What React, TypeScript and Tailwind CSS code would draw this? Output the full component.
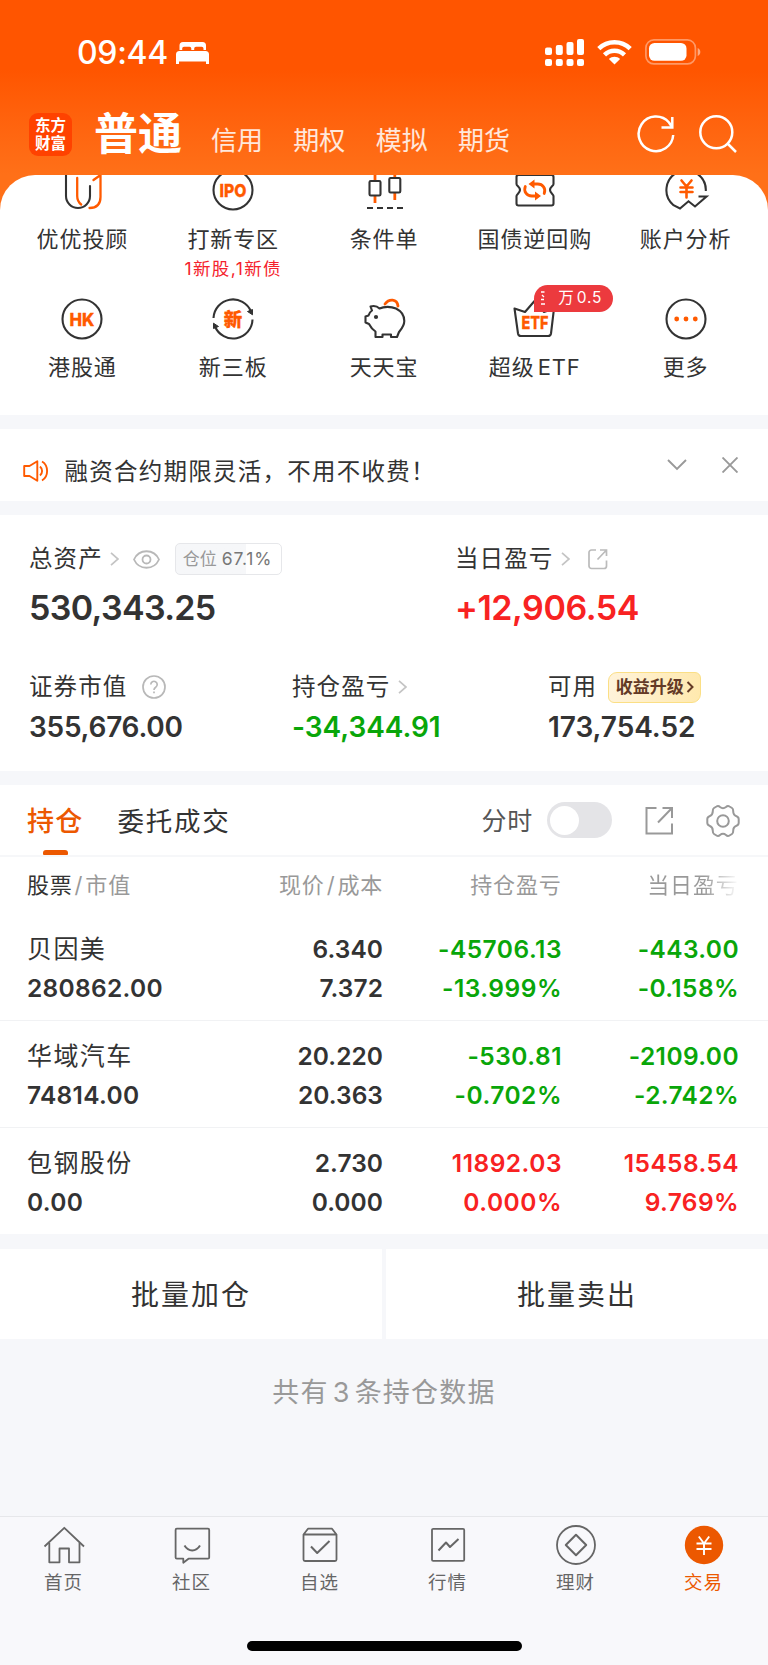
import type { ReactNode } from 'react';
import clsx from 'clsx';

const DARK = '#333333';
const ORANGE = '#ff5a00';

function LineIcon({ children }: { children: ReactNode }) {
  return (
    <svg
      width="48"
      height="48"
      viewBox="0 0 48 48"
      fill="none"
      stroke={DARK}
      strokeWidth="2.1"
      strokeLinejoin="round"
      className="block shrink-0"
    >
      {children}
    </svg>
  );
}

function IconText({ children, y, size, width }: { children: string; y: number; size: number; width: number }) {
  return (
    <text
      x={24 - width / 2}
      y={y}
      fontSize={size}
      fontWeight="800"
      fill={ORANGE}
      stroke={ORANGE}
      strokeWidth="0.3"
      textLength={width}
      lengthAdjust="spacingAndGlyphs"
    >
      {children}
    </text>
  );
}

const shortcuts: { label: ReactNode; note?: string; badge?: ReactNode; icon: ReactNode }[] = [
  {
    label: '优优投顾',
    icon: (
      <LineIcon>
        <path d="M8 4V30a12 12 0 0 0 24 0V20" strokeLinecap="round" />
        <g stroke={ORANGE} strokeWidth="2.3" strokeLinecap="round">
          <path d="M19.2 12V30c0 4 1.3 6.5 4 8.5" />
          <path d="M35.5 14L42.5 9V31c0 7-4 11-11 11" />
        </g>
      </LineIcon>
    ),
  },
  {
    label: '打新专区',
    note: '1新股,1新债',
    icon: (
      <LineIcon>
        <circle cx="24" cy="24" r="19.5" />
        <IconText y={30.5} size={18} width={27}>IPO</IconText>
      </LineIcon>
    ),
  },
  {
    label: '条件单',
    icon: (
      <LineIcon>
        <g stroke={ORANGE} strokeWidth="2.8">
          <path d="M15 6V14M15 30V37M34.8 6V11M34.800 27V34" />
        </g>
        <rect x="9.5" y="15" width="11" height="14.5" rx="1.2" />
        <rect x="29.3" y="12" width="11" height="14.5" rx="1.2" />
        <path d="M7 42h6M17 42h6M27 42h6M37 42h6" />
      </LineIcon>
    ),
  },
  {
    label: '国债逆回购',
    icon: (
      <LineIcon>
        <path d="M7.500 9H40.500a2 2 0 0 1 2 2V18c0 2-3.500 3-3.500 6s3.500 4 3.500 6v7.500a2 2 0 0 1-2 2H7.500a2 2 0 0 1-2-2V30c0-2 3.500-3 3.500-6s-3.500-4-3.500-6V11a2 2 0 0 1 2-2z" />
        <g stroke={ORANGE} strokeWidth="2.8" strokeLinecap="round">
          <path d="M14.300 20.500c-2 5 1.500 9.500 6.500 9.500h4M33.200 27.500c2-5-1.500-9.500-6.500-9.500h-4" />
        </g>
        <path d="M24 25.500L30 30L24 34.500zM23.500 13.500L17.500 18L23.500 22.500z" fill={ORANGE} stroke="none" />
      </LineIcon>
    ),
  },
  {
    label: '账户分析',
    icon: (
      <LineIcon>
        <path d="M43.800 25A19.700 19.700 0 1 0 11.500 39.200L18 42.500L26.500 35.300L33 40.500L44.500 30.500H36.500" strokeLinejoin="miter" />
        <g stroke={ORANGE} strokeWidth="2.600" strokeLinecap="round">
          <path d="M19.500 14.500L24.500 20.500L29.500 14.500M24.500 20.500V31.500M18.500 21.500H30.500M18.500 26H30.500" />
        </g>
      </LineIcon>
    ),
  },
  {
    label: '港股通',
    icon: (
      <LineIcon>
        <circle cx="24" cy="24" r="19.5" />
        <IconText y={30.5} size={18} width={25}>HK</IconText>
      </LineIcon>
    ),
  },
  {
    label: '新三板',
    icon: (
      <LineIcon>
        <path d="M4.500 23A19.500 19.500 0 0 1 42 16.500M43.500 24.500A19.500 19.500 0 0 1 6 31.500" />
        <path d="M38.500 16.500L43.500 14.500V19.800zM9.500 31.500L4.500 33.500V28.200z" fill={DARK} strokeWidth="1" />
        <IconText y={31} size={18.5} width={18.5}>新</IconText>
      </LineIcon>
    ),
  },
  {
    label: '天天宝',
    icon: (
      <LineIcon>
        <path d="M10.500 11.500c3.500-1 6.500-.5 9 2C24 11.300 31 11.300 36 13.500C41 16 44.300 20 44.300 26C44.300 31 41 34.500 39 37L37 42H31V39.500H22.500V42H15.500V36.500C12.500 34.500 10.500 32 9 29L5.500 27.500V21.500L8.500 20.500C9.300 18 10.500 16.500 12 15.500Z" />
        <circle cx="16" cy="22" r="2.1" fill={DARK} stroke="none" />
        <path d="M25 9C29 3.500 37 3.500 38 11" stroke={ORANGE} strokeWidth="2.8" strokeLinecap="round" />
      </LineIcon>
    ),
  },
  {
    label: (
      <>
        超级<span className="ml-[3px]">ETF</span>
      </>
    ),
    badge: (
      <>
        万<span className="ml-[2px]">0.5</span>
      </>
    ),
    icon: (
      <LineIcon>
        <path d="M3.500 13.500L14 17L23.500 6L33 17L43 13.500L40 38.500a3 3 0 0 1-3 2.500H10a3 3 0 0 1-3-2.500z" />
        <IconText y={34.3} size={18} width={27}>ETF</IconText>
      </LineIcon>
    ),
  },
  {
    label: '更多',
    icon: (
      <LineIcon>
        <circle cx="24" cy="24" r="19.5" />
        <g fill={ORANGE} stroke="none">
          <circle cx="14.7" cy="24" r="2.4" />
          <circle cx="24" cy="24" r="2.4" />
          <circle cx="33.3" cy="24" r="2.4" />
        </g>
      </LineIcon>
    ),
  },
];

const holdings = [
  { name: '贝因美', value: '280862.00', price: '6.340', cost: '7.372', pnl: '-45706.13', pnlPct: '-13.999%', day: '-443.00', dayPct: '-0.158%', up: false },
  { name: '华域汽车', value: '74814.00', price: '20.220', cost: '20.363', pnl: '-530.81', pnlPct: '-0.702%', day: '-2109.00', dayPct: '-2.742%', up: false },
  { name: '包钢股份', value: '0.00', price: '2.730', cost: '0.000', pnl: '11892.03', pnlPct: '0.000%', day: '15458.54', dayPct: '9.769%', up: true },
];

const navItems: { label: string; active?: boolean; icon: ReactNode }[] = [
  {
    label: '首页',
    icon: (
      <>
        <path d="M.5 21.500L20.300 2.800L40 21.500" />
        <path d="M5.300 18V37.300H15.500V23.500H25V37.300H35.500V18" />
      </>
    ),
  },
  {
    label: '社区',
    icon: (
      <>
        <path d="M4.800 3.700H36a1.200 1.200 0 0 1 1.200 1.200V32.500a1.200 1.200 0 0 1-1.200 1.200H16.500L11.300 37.800V33.700H4.800a1.200 1.200 0 0 1-1.200-1.200V4.900a1.200 1.200 0 0 1 1.200-1.200z" />
        <path d="M12.500 20.500c4 6.500 11.500 6.500 15.500 0" strokeWidth="2" />
      </>
    ),
  },
  {
    label: '自选',
    icon: (
      <>
        <path d="M3.500 9.500L8 3.700H32L36.500 9.500V34.500a1.500 1.500 0 0 1-1.500 1.500H5a1.500 1.500 0 0 1-1.500-1.500zM3.500 9.500H36.500" />
        <path d="M11 21.500L17.200 28L29.500 16" strokeWidth="2" />
      </>
    ),
  },
  {
    label: '行情',
    icon: (
      <>
        <rect x="4" y="3.9" width="32.2" height="32" rx="1.2" />
        <path d="M10.500 25.500L18 17.500L22 22L30.500 14" strokeWidth="2" />
      </>
    ),
  },
  {
    label: '理财',
    icon: (
      <>
        <circle cx="20" cy="20" r="19" />
        <path d="M20 9.700L30.200 20L20 30.300L9.800 20z" strokeWidth="2" />
      </>
    ),
  },
  {
    label: '交易',
    active: true,
    icon: (
      <>
        <circle cx="20" cy="20" r="19.2" fill="#ec5800" stroke="none" />
        <path d="M14.800 11.500L20 18.500L25.200 11.500M20 18.500V30M12.500 18.500H27.500M12.500 24H27.500" stroke="#fff" strokeWidth="1.900" />
      </>
    ),
  },
];

function Chevron({ className }: { className?: string }) {
  return (
    <svg width="9" height="14" viewBox="0 0 9 14" fill="none" stroke="#c4c4c4" strokeWidth="1.7" className={clsx('shrink-0', className)}>
      <path d="M1 .8L8 7L1 13.200" />
    </svg>
  );
}

function StatusBar() {
  return (
    <div className="flex h-[104px] items-center pl-[77px] pr-[67px] text-white">
      <span className="mt-[2px] text-[32px] font-medium leading-none tracking-[-0.3px]">09:44</span>
      <svg width="33" height="22" viewBox="0 0 33 22" fill="#fff" className="ml-[8px] mt-[2px]">
        <path d="M3.500 8V3.500A3.500 3.500 0 0 1 7 0H26.500A3.500 3.500 0 0 1 30 3.500V8H27.500V6.500A1.800 1.800 0 0 0 25.700 4.700H20a1.800 1.800 0 0 0-1.800 1.800V8H15.300V6.500A1.800 1.800 0 0 0 13.500 4.700H8A1.800 1.800 0 0 0 6.200 6.500V8z" />
        <path d="M0 12.500A3.500 3.500 0 0 1 3.500 9H29.500A3.500 3.500 0 0 1 33 12.500V22H30V19.500H3V22H0z" />
      </svg>
      <div className="ml-auto flex items-center gap-[13px]">
        <svg width="39" height="27" viewBox="0 0 39 27" fill="#fff">
          <rect x="0" y="8.5" width="7" height="7.5" rx="2" />
          <rect x="10.8" y="6" width="7" height="10" rx="2" />
          <rect x="21.5" y="3" width="7" height="13" rx="2" />
          <rect x="32" y="0" width="7" height="16" rx="2" />
          <rect x="0" y="20" width="7" height="7" rx="2" />
          <rect x="10.8" y="20" width="7" height="7" rx="2" />
          <rect x="21.5" y="20" width="7" height="7" rx="2" />
          <rect x="32" y="20" width="7" height="7" rx="2" />
        </svg>
        <svg width="35" height="25" viewBox="0 0 35 25" fill="none" stroke="#fff" strokeWidth="4.5">
          <path d="M1.800 8.700C10.500.2 24.500.2 33.200 8.700" />
          <path d="M7.500 14.800C13.200 9.300 21.800 9.300 27.500 14.800" />
          <path d="M17.500 24.500L11.900 18.900C15 16 20 16 23.100 18.900z" fill="#fff" stroke="none" />
        </svg>
        <svg width="56" height="26" viewBox="0 0 56 26" fill="none">
          <rect x=".9" y=".9" width="49.5" height="24" rx="8" stroke="#fff" strokeOpacity=".4" strokeWidth="1.7" />
          <rect x="4" y="4" width="37.5" height="17.8" rx="5.5" fill="#fff" />
          <path d="M52.700 9c3.500 1.500 3.500 6.500 0 8z" fill="#fff" fillOpacity=".5" />
        </svg>
      </div>
    </div>
  );
}

function Header() {
  return (
    <div className="flex h-[71px] items-start pl-[29px] pr-[31px] text-white">
      <div className="mt-[9px] h-[43px] w-[43px] rounded-[9px] bg-[#ff4200] px-[6px] pt-[4px] text-[15.5px] font-bold leading-[17.5px]">
        东方财富
      </div>
      <span className="ml-[22px] mt-[8px] text-[44px] font-bold leading-none">普通</span>
      <div className="ml-[29px] mt-[24px] flex gap-[30.3px] text-[26px] leading-none text-white/85">
        <span>信用</span>
        <span>期权</span>
        <span>模拟</span>
        <span>期货</span>
      </div>
      <svg width="38" height="38" viewBox="0 0 38 38" fill="none" stroke="#fff" strokeWidth="2.5" className="ml-auto mt-[11px]">
        <path d="M36.200 20A17.300 17.300 0 1 1 32 7.500L35 12" />
        <path d="M35.300 2V12.500H24.500" />
      </svg>
      <svg width="38" height="38" viewBox="0 0 38 38" fill="none" stroke="#fff" strokeWidth="2.5" className="ml-[24px] mt-[11px]">
        <circle cx="17.3" cy="17.3" r="16" />
        <path d="M28.500 28.500L37 37" />
      </svg>
    </div>
  );
}

function Shortcuts() {
  return (
    <div className="h-[240px] overflow-hidden rounded-t-[35px] bg-white px-[7px]">
      <div className="-mt-[9px] grid grid-cols-5">
        {shortcuts.map((item, i) => (
          <div key={i} className="flex h-[128.5px] flex-col items-center">
            <div className="relative">
              {item.icon}
              {item.badge && (
                <div className="absolute -top-[10px] left-[23.5px] flex h-[27px] w-[79px] items-center rounded-[13.5px] rounded-bl-none bg-[#ec3a3e] pl-[7px] text-[15.5px] leading-none text-white">
                  <svg width="4" height="14" viewBox="0 0 4 14" stroke="#fff" strokeWidth="1.3" fill="none">
                    <path d="M0 1H3.500M1 4L3 6M0 8.500H3M0 13H4" />
                  </svg>
                  <span className="ml-[13px] tracking-[0.9px]">{item.badge}</span>
                </div>
              )}
            </div>
            <span className="mt-[12.5px] text-[22px] leading-[24px] tracking-[0.9px]">{item.label}</span>
            {item.note && <span className="mt-[8px] text-[17.5px] leading-[20px] tracking-[1.4px] text-[#f5222d]">{item.note}</span>}
          </div>
        ))}
      </div>
    </div>
  );
}

function Notice() {
  return (
    <div className="mt-[14px] flex h-[72px] items-center bg-white pl-[23px] pr-[30px]">
      <svg width="26" height="22" viewBox="0 0 26 22" fill="none" stroke={ORANGE} strokeWidth="1.9" className="mt-[12px]">
        <path d="M1.200 6H6.500L14.300 1.200V20.800L6.500 16H1.200z" strokeLinejoin="round" />
        <path d="M17 6.500c2.800 2.500 2.800 6.500 0 9M19 1.500c6.800 4 6.800 15 0 19" />
      </svg>
      <span className="ml-[15.5px] mt-[14px] text-[23.5px] leading-none tracking-[1.25px]">融资合约期限灵活，不用不收费！</span>
      <svg width="20" height="12" viewBox="0 0 20 12" fill="none" stroke="#999" strokeWidth="1.9" className="ml-auto">
        <path d="M1 1L10 10L19 1" />
      </svg>
      <svg width="16" height="16" viewBox="0 0 16 16" fill="none" stroke="#999" strokeWidth="1.9" className="ml-[35px]">
        <path d="M.5.500L15.500 15.500M15.500.500L.5 15.500" />
      </svg>
    </div>
  );
}

function Assets() {
  return (
    <div className="mt-[14px] h-[256px] bg-white pl-[29px] pt-[28px] text-[23.5px] leading-none tracking-[1.1px]">
      <div className="flex h-[32px] items-center">
        <div className="flex w-[426px] items-center">
          <span>总资产</span>
          <Chevron className="ml-[7px]" />
          <svg width="27" height="19" viewBox="0 0 27 19" fill="none" stroke="#b8b8b8" strokeWidth="1.8" className="ml-[14px]">
            <path d="M1 9.500C6 -1.500 21 -1.500 26 9.500C21 20.500 6 20.500 1 9.500z" />
            <circle cx="13.5" cy="9.5" r="4" />
          </svg>
          <div className="ml-[15px] flex h-[32px] w-[107px] items-center rounded-[5px] border border-[#e6e7ea] bg-linear-to-r from-[#f6f7f9] from-67% to-white to-67% pl-[7px] tracking-normal">
            <span className="text-[17px] text-[#999]">仓位</span>
            <span className="ml-[5px] text-[17.5px] tracking-[0.8px] text-[#777]">67.1%</span>
          </div>
        </div>
        <span>当日盈亏</span>
        <Chevron className="ml-[8px]" />
        <svg width="20" height="21" viewBox="0 0 20 21" fill="none" stroke="#bbb" strokeWidth="1.7" className="ml-[17.5px]">
          <path d="M8 1H3.500A2.500 2.500 0 0 0 1 3.500V17a2.500 2.500 0 0 0 2.500 2.500H16A2.500 2.500 0 0 0 18.500 17V11.500M12 1H18.500V7M18.500 1L9.500 10.500" />
        </svg>
      </div>
      <div className="mt-[13px] flex h-[40px] items-center text-[34px] font-semibold tracking-[-0.65px]">
        <span className="w-[426px]">530,343.25</span>
        <span className="tracking-[-0.45px] text-[#f82222]">+12,906.54</span>
      </div>
      <div className="mt-[43px] flex h-[32px] items-center">
        <div className="flex w-[263px] items-center">
          <span>证券市值</span>
          <svg width="24" height="24" viewBox="0 0 24 24" fill="none" stroke="#b8b8b8" strokeWidth="1.7" className="ml-[14.5px]">
            <circle cx="12" cy="12" r="11" />
            <path d="M8.800 9.500a3.200 3.200 0 1 1 4.900 2.700c-1.200.8-1.700 1.300-1.700 2.800M12 16.500v1.800" />
          </svg>
        </div>
        <div className="flex w-[256px] items-center">
          <span>持仓盈亏</span>
          <Chevron className="ml-[8px]" />
        </div>
        <span>可用</span>
        <div className="ml-[11px] flex h-[31px] w-[93px] items-center justify-center rounded-[9px] rounded-bl-[6px] rounded-tr-[6px] border-[1.5px] border-[#fbdf85] bg-linear-to-r from-[#fff3da] to-[#ffe9ae] text-[17px] font-bold tracking-normal text-[#643a26]">
          <span>收益升级</span>
          <svg width="8" height="12" viewBox="0 0 8 12" fill="none" stroke="#643a26" strokeWidth="2" className="ml-[2px]">
            <path d="M1.500 1L6.500 6L1.500 11" />
          </svg>
        </div>
      </div>
      <div className="mt-[7px] flex h-[34px] items-center text-[28px] font-semibold tracking-[-0.05px]">
        <span className="w-[263px] tracking-[-0.25px]">355,676.00</span>
        <span className="w-[256px] text-[#09a609]">-34,344.91</span>
        <span>173,754.52</span>
      </div>
    </div>
  );
}

function Tabs() {
  return (
    <div className="mt-[14px] flex h-[72px] items-center border-b-2 border-[#f6f7f9] bg-white pl-[27px] pr-[28px] leading-none">
      <div className="relative flex h-full items-center pt-[2px] text-[27px] font-medium tracking-[1.2px] text-[#ec5800]">
        <span>持仓</span>
        <i className="absolute bottom-0 left-[16px] h-[5px] w-[25px] rounded-t-[3px] rounded-b-[1px] bg-[#ec5800]" />
      </div>
      <span className="ml-[34px] pt-[2px] text-[26.5px] tracking-[1.8px]">委托成交</span>
      <span className="ml-auto pt-[2px] text-[25px] tracking-[0.8px] text-[#555]">分时</span>
      <div className="ml-[13.5px] flex h-[36px] w-[65px] items-center rounded-full bg-[#e4e4e7] pl-[3.5px]">
        <i className="h-[29px] w-[29px] rounded-full bg-white" />
      </div>
      <svg width="29" height="28" viewBox="0 0 29 28" fill="none" stroke="#999" strokeWidth="2" className="ml-[33.5px] mt-px">
        <path d="M11.500 1H1.500V26.500H27V16.500M17.500 1H27V11M27 1L13 15.500" />
      </svg>
      <svg width="34" height="34" viewBox="0 0 34 34" fill="none" stroke="#999" strokeWidth="2" className="ml-[32px] mt-px">
        <circle cx="17" cy="17" r="5.8" />
        <path
          d="M10.500 2.500C12 1.500 13 2 14 3c2 1.600 4 1.600 6 0c1-1 2-1.500 3.500-.500l2.500 1.500c1.300.8 1.200 2 1.200 3.300c0 2.500 1 4.200 3.300 5c1.700.600 2.200 1.500 2.200 3v3.400c0 1.500-.500 2.400-2.200 3c-2.300.800-3.300 2.500-3.300 5c0 1.300.1 2.500-1.200 3.300l-2.500 1.500c-1.500 1-2.500.500-3.500-.500c-2-1.600-4-1.600-6 0c-1 1-2 1.500-3.500.500L8 30c-1.300-.8-1.200-2-1.200-3.300c0-2.500-1-4.200-3.300-5c-1.700-.6-2.200-1.500-2.200-3v-3.400c0-1.500.5-2.400 2.200-3c2.300-.8 3.300-2.500 3.300-5C6.800 6 6.700 4.800 8 4z"
        />
      </svg>
    </div>
  );
}

function Pair({ top, bottom, className }: { top: string; bottom: string; className?: string }) {
  return (
    <div className={clsx('flex flex-col text-right text-[24.5px] font-semibold leading-[38.5px]', className)}>
      <span>{top}</span>
      <span>{bottom}</span>
    </div>
  );
}

function Holdings() {
  return (
    <div className="h-[377px] bg-white">
      <div className="grid h-[57px] grid-cols-[168px_188px_178.5px_177px] items-center pb-px pl-[27px] text-[22px] leading-none tracking-[0.8px] text-[#999]">
        <span>
          <span className="text-[#333]">股票</span>
          <span className="px-[2px]">/</span>市值
        </span>
        <span className="text-right">
          现价<span className="px-[2px]">/</span>成本
        </span>
        <span className="text-right">持仓盈亏</span>
        <span className="bg-linear-to-r from-[#999] from-80% to-white bg-clip-text text-right text-transparent">当日盈亏</span>
      </div>
      {holdings.map((row) => {
        const tone = row.up ? 'text-[#f82222]' : 'text-[#09a609]';
        return (
          <div
            key={row.name}
            className="grid h-[107px] grid-cols-[168px_188px_179px_177px] items-start border-b border-[#f1f2f4] pl-[27px] pt-[16px] last:h-[106px] last:border-0"
          >
            <div className="flex flex-col leading-[38.5px]">
              <span className="pt-px text-[25px] leading-[37.5px] tracking-[1.4px]">{row.name}</span>
              <span className="text-[24.5px] font-semibold tracking-[0.3px]">{row.value}</span>
            </div>
            <Pair top={row.price} bottom={row.cost} className="tracking-[0.05px]" />
            <Pair top={row.pnl} bottom={row.pnlPct} className={clsx('tracking-[0.5px]', tone)} />
            <Pair top={row.day} bottom={row.dayPct} className={clsx('tracking-[0.4px]', tone)} />
          </div>
        );
      })}
    </div>
  );
}

function BottomNav() {
  return (
    <div className="mt-auto h-[149px] border-t border-[#e6e7ea] bg-[#f8f8fb]">
      <div className="grid grid-cols-6 pt-[8px]">
        {navItems.map((item) => (
          <div key={item.label} className="flex flex-col items-center">
            <svg width="40" height="40" viewBox="0 0 40 40" fill="none" stroke="#666" strokeWidth="1.8" strokeLinejoin="round" className="overflow-visible">
              {item.icon}
            </svg>
            <span className={clsx('mt-[7px] pr-px text-[18.5px] leading-[20px] tracking-[1px]', item.active ? 'text-[#ec5800]' : 'text-[#666]')}>
              {item.label}
            </span>
          </div>
        ))}
      </div>
      <div className="mx-auto mt-[49px] h-[10px] w-[275px] rounded-full bg-black" />
    </div>
  );
}

export default function App() {
  return (
    <div className="flex h-[1665px] w-[768px] flex-col overflow-hidden bg-[#f6f7fa] font-['Inter','Noto_Sans_CJK_SC',sans-serif] text-[#333]">
      <div className="bg-linear-to-b from-[#ff5500] from-[70px] to-[#ff7018] to-[175px]">
        <StatusBar />
        <Header />
        <Shortcuts />
      </div>
      <Notice />
      <Assets />
      <Tabs />
      <Holdings />
      <div className="mt-[15px] flex h-[90px] gap-[4px] text-[28px] leading-none tracking-[2px]">
        <div className="flex w-[382px] items-center justify-center bg-white pt-px">批量加仓</div>
        <div className="flex flex-1 items-center justify-center bg-white pt-px">批量卖出</div>
      </div>
      <div className="mt-[39px] text-center text-[27px] leading-[30px] tracking-[1.2px] text-[#999]">
        共有<span className="px-[4px]">3</span>条持仓数据
      </div>
      <BottomNav />
    </div>
  );
}
